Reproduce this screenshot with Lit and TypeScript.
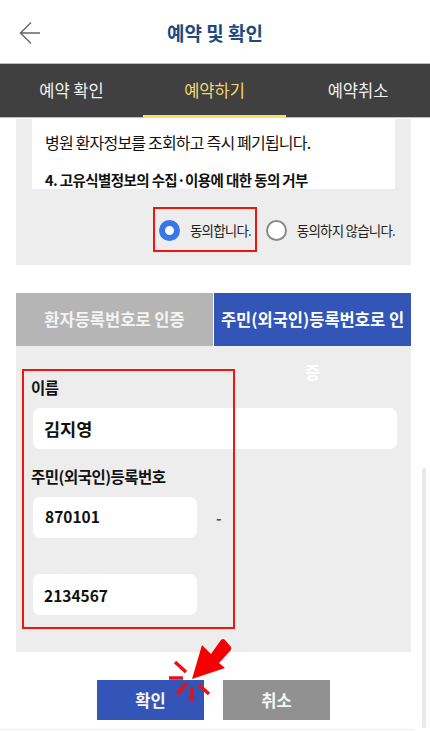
import { LitElement, html, css, svg } from "lit";
import { customElement } from "lit/decorators.js";

@customElement("app-root")
export class AppRoot extends LitElement {
  static styles = css`
    :host {
      display: block;
      position: relative;
      width: 430px;
      height: 731px;
      overflow: hidden;
      background: #fff;
      font-family: "Noto Sans CJK KR", "Noto Sans", sans-serif;
      color: #111;
    }
    .header {
      height: 63px;
      display: flex;
      align-items: center;
      justify-content: center;
      position: relative;
      border-bottom: 1px solid #bdbdbd;
    }
    .back {
      position: absolute;
      left: 19px;
      top: 21px;
      width: 22px;
      height: 24px;
    }
    .title {
      font-size: 19px;
      font-weight: 700;
      color: #1d4a80;
      margin-top: 1px;
    }
    .tabs {
      height: 53px;
      display: grid;
      grid-template-columns: 143px 143px 144px;
      background: #404040;
      border-bottom: 1px solid #bdbdbd;
    }
    .tab {
      display: flex;
      align-items: center;
      justify-content: center;
      color: #f2f2f2;
      font-size: 16.5px;
      padding-bottom: 1px;
    }
    .tab.active {
      color: #f3d873;
      border-bottom: 3px solid #fbdc6c;
      margin-bottom: -1px;
      padding-bottom: 0;
    }
    .agree {
      margin: 1px 19px 0 16px;
      height: 146px;
      background: #ededed;
      padding: 0 16px;
      display: flex;
      flex-direction: column;
    }
    .terms {
      height: 70px;
      background: #fff;
      overflow: hidden;
      padding: 0 13px;
      font-size: 16px;
      letter-spacing: -0.8px;
    }
    .terms p {
      margin: 0;
      height: 48px;
      line-height: 46px;
    }
    .terms .h {
      height: auto;
      line-height: 22px;
      font-size: 14.5px;
      font-weight: 700;
      letter-spacing: -0.6px;
      margin-top: 2px;
    }
    .radios {
      display: flex;
      align-items: center;
      box-sizing: border-box;
      padding: 6px 0 0 126px;
      height: 76px;
      font-size: 13.5px;
      letter-spacing: -0.8px;
      color: #222;
      white-space: nowrap;
    }
    .radio {
      display: flex;
      align-items: center;
      gap: 10px;
    }
    .radio.on {
      width: 105px;
      padding-left: 1px;
      box-sizing: border-box;
    }
    .radio.off {
      margin-left: 5px;
    }
    .dot {
      width: 21px;
      height: 21px;
      box-sizing: border-box;
      border-radius: 50%;
      flex: none;
    }
    .on .dot {
      border: 6px solid #3677ea;
      background: #fff;
    }
    .off .dot {
      border: 2px solid #8a8a8a;
      background: #fff;
    }
    .auth {
      margin: 28px 19px 0 16px;
    }
    .auth-tabs {
      display: grid;
      grid-template-columns: 197px 198px;
      grid-template-rows: 53px;
      font-size: 16.5px;
      font-weight: 700;
      line-height: 53px;
      color: #fff;
      text-align: center;
    }
    .auth-tab {
      background: #b5b5b5;
      color: #f4f4f4;
      white-space: nowrap;
      height: 53px;
    }
    .auth-tab.on {
      position: relative;
      z-index: 1;
      background: #3455b8;
      color: #fff;
      margin-left: 1px;
      padding: 0 5px;
      white-space: normal;
      word-break: break-all;
    }
    .form {
      height: 306px;
      background: #ededed;
      box-sizing: border-box;
      padding: 30px 14px 0 17px;
    }
    label {
      display: block;
      margin-left: -2px;
      font-size: 15.5px;
      font-weight: 700;
      line-height: 22px;
      letter-spacing: -0.5px;
      color: #111;
    }
    .input {
      background: #fff;
      border-radius: 7px;
      height: 41px;
      display: flex;
      align-items: center;
      font-size: 17.5px;
      font-weight: 700;
      color: #111;
      box-sizing: border-box;
    }
    .name {
      margin-top: 10px;
      padding-left: 11px;
      margin-bottom: 16px;
    }
    .rrn-row {
      margin-top: 10px;
      display: flex;
      align-items: center;
    }
    .short {
      width: 164px;
      padding: 0 0 3px 12px;
      font-size: 15.5px;
    }
    .dash {
      margin-left: 19px;
      color: #555;
      font-size: 15px;
      font-weight: 700;
    }
    .short.second {
      margin-top: 36px;
      padding: 0 0 0 11px;
    }
    .actions {
      margin-top: 28px;
      display: flex;
      justify-content: flex-start;
      gap: 19px;
      padding-left: 97px;
    }
    .btn {
      width: 107px;
      height: 40px;
      display: flex;
      align-items: center;
      justify-content: center;
      color: #f6f6f6;
      font-size: 16.5px;
      font-weight: 700;
    }
    .btn.ok {
      background: #3455b8;
    }
    .btn.cancel {
      background: #919191;
    }
    .foot {
      position: absolute;
      left: 0;
      top: 729px;
      width: 415px;
      height: 1px;
      background: #eeeeee;
    }
    .mark {
      position: absolute;
      z-index: 2;
      box-sizing: border-box;
      border: 2px solid #f5140c;
      pointer-events: none;
    }
    .mark.agree-mark {
      left: 153px;
      top: 207px;
      width: 104px;
      height: 45px;
    }
    .mark.form-mark {
      left: 22px;
      top: 369px;
      width: 213px;
      height: 260px;
    }
    .scroll {
      position: absolute;
      left: 422px;
      top: 468px;
      width: 4px;
      height: 260px;
      background: #e8e8e8;
      border-radius: 2px;
    }
    .pointer {
      position: absolute;
      z-index: 2;
      left: 165px;
      top: 636px;
      width: 72px;
      height: 68px;
    }
  `;

  render() {
    return html`
      <div class="header">
        <svg class="back" viewBox="0 0 22 24" fill="none" stroke="#666" stroke-width="1.4">
          <path d="M12 1.5 1.5 12 12 22.5M1.5 12H21" />
        </svg>
        <div class="title">예약 및 확인</div>
      </div>
      <div class="tabs">
        <div class="tab">예약 확인</div>
        <div class="tab active">예약하기</div>
        <div class="tab">예약취소</div>
      </div>
      <div class="agree">
        <div class="terms">
          <p>병원 환자정보를 조회하고 즉시 폐기됩니다.</p>
          <p class="h">4. 고유식별정보의 수집·이용에 대한 동의 거부</p>
        </div>
        <div class="radios">
          <div class="radio on"><span class="dot"></span>동의합니다.</div>
          <div class="radio off"><span class="dot"></span>동의하지 않습니다.</div>
        </div>
      </div>
      <div class="auth">
        <div class="auth-tabs">
          <div class="auth-tab">환자등록번호로 인증</div>
          <div class="auth-tab on">주민(외국인)등록번호로 인증</div>
        </div>
        <div class="form">
          <label>이름</label>
          <div class="input name">김지영</div>
          <label>주민(외국인)등록번호</label>
          <div class="rrn-row">
            <div class="input short">870101</div>
            <span class="dash">-</span>
          </div>
          <div class="input short second">2134567</div>
        </div>
      </div>
      <div class="actions">
        <div class="btn ok">확인</div>
        <div class="btn cancel">취소</div>
      </div>
      <div class="foot"></div>
      <div class="scroll"></div>
      <div class="mark agree-mark"></div>
      <div class="mark form-mark"></div>
      <svg class="pointer" viewBox="0 0 72 68">
        ${svg`
          <path d="M27 43 37 9 46 18 56 4Q58 2 60 4L66 11Q67 13 65 15L54 27 60 32Z" fill="#f40000"/>
          <g stroke="#ee1010" stroke-width="3.5" fill="none">
            <path d="M10 26 21 36M4 42H18M12 58 22 47M27 51V65M34 49 44 58" />
          </g>
        `}
      </svg>
    `;
  }
}
